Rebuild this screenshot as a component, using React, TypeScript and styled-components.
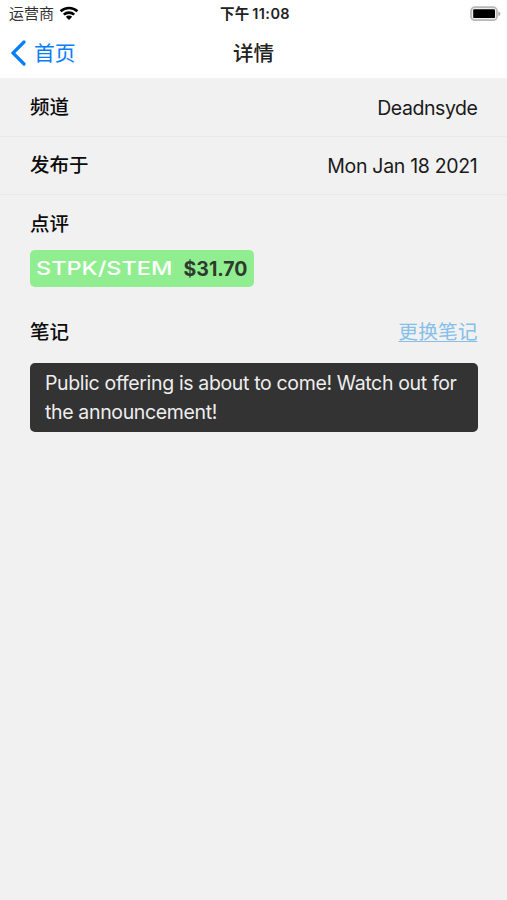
import React from "react";
import styled, { createGlobalStyle } from "styled-components";

const GlobalStyle = createGlobalStyle`
  * { box-sizing: border-box; }
  body {
    margin: 0;
    background: #f1f1f1;
    color: #0c0c0c;
    font-family: Inter, "Noto Sans CJK SC", sans-serif;
  }
`;

const Screen = styled.main`
  width: 507px;
  height: 900px;
  overflow: hidden;
  background: #f1f1f1;
`;

const Header = styled.header`
  height: 79px;
  background: #fff;
  border-bottom: 1px solid #f3f3f3;
`;

const Bar = styled.div<{ $height: number; $padding: string }>`
  display: grid;
  grid-template-columns: 1fr auto 1fr;
  align-items: center;
  height: ${(p) => p.$height}px;
  padding: ${(p) => p.$padding};
`;

const Carrier = styled.div`
  display: flex;
  align-items: center;
  gap: 5px;
  font-size: 15px;
  line-height: 20px;
  color: #333;
`;

const Clock = styled.div`
  font-size: 14.5px;
  line-height: 20px;
  font-weight: 600;
  letter-spacing: 0.4px;
  word-spacing: -1.5px;
  color: #222;
`;

const BatterySlot = styled.div`
  display: flex;
  justify-content: flex-end;
`;

const BackButton = styled.a`
  display: flex;
  align-items: center;
  gap: 8px;
  color: #087dfa;
  font-size: 20.8px;
  line-height: 28px;
`;

const BackText = styled.span`
  padding-top: 2px;
`;

const Title = styled.h1`
  margin: 0;
  padding-top: 2px;
  font-size: 20.5px;
  line-height: 28px;
  font-weight: 500;
  color: #222;
`;

const Row = styled.div`
  display: flex;
  justify-content: space-between;
  align-items: center;
  height: 58px;
  padding: 0 29.5px 0 30px;
  border-bottom: 1px solid #e9e9e9;
`;

const Label = styled.h2`
  margin: 0;
  font-size: 19.5px;
  line-height: 28px;
  font-weight: 500;
`;

const RowLabel = styled(Label)`
  padding-bottom: 1px;
`;

const Value = styled.span<{ $spacing: number }>`
  font-size: 19.5px;
  line-height: 28px;
  letter-spacing: ${(p) => p.$spacing}px;
  color: #1a1a1a;
`;

const Section = styled.section<{ $top: number }>`
  padding: ${(p) => p.$top}px 29.5px 0 30px;
`;

const SectionHead = styled.div`
  display: flex;
  justify-content: space-between;
  align-items: center;
`;

const Tag = styled.div`
  display: flex;
  align-items: center;
  justify-content: space-between;
  width: 223.5px;
  height: 37px;
  margin-top: 11.5px;
  padding: 1px 6px 0;
  border-radius: 5px;
  background: #90ee90;
`;

const Ticker = styled.span`
  width: 138px;
  font-size: 19px;
  line-height: 28px;
  font-weight: 500;
  white-space: nowrap;
  color: #fff;
  transform: scaleX(1.235);
  transform-origin: left center;
`;

const Price = styled.span`
  font-size: 19.5px;
  line-height: 28px;
  font-weight: 700;
  color: #2f3a2f;
`;

const EditLink = styled.a`
  font-size: 19.8px;
  line-height: 28px;
  color: #86bfea;
  text-decoration: underline;
  text-decoration-thickness: 1px;
  text-underline-offset: 2px;
`;

const Note = styled.p`
  height: 69px;
  margin: 17px 0 0;
  padding: 6px 15px;
  border-radius: 5px;
  background: #333;
  color: #eee;
  font-size: 19.5px;
  line-height: 29px;
  letter-spacing: -0.35px;
  white-space: pre;
`;

const WifiIcon = () => (
  <svg width="20" height="15" viewBox="0 0 20 15">
    <g fill="none" stroke="#000" strokeWidth="2.6">
      <path d="M1.6 5.3C6.3 0.9 13.7 0.9 18.4 5.3" />
      <path d="M4.8 8.6C7.8 5.9 12.2 5.9 15.2 8.6" />
    </g>
    <path d="M6.8 10.8C8.6 9.2 11.4 9.2 13.2 10.8L10 14Z" fill="#000" />
  </svg>
);

const BatteryIcon = () => (
  <svg width="31" height="16" viewBox="0 0 31 16">
    <rect x="1" y="1.2" width="26" height="13" rx="3.8" fill="#eee" stroke="#b8b8b8" strokeWidth="1.7" />
    <rect x="3.2" y="3.3" width="21.8" height="8.8" rx="1.2" fill="#000" />
    <path d="M28.4 5.4C31 6 31 9.4 28.4 10Z" fill="#aaa" />
  </svg>
);

const BackIcon = () => (
  <svg width="16" height="26" viewBox="0 0 16 26">
    <path d="M14 2L3 13L14 24" fill="none" stroke="#087dfa" strokeWidth="3.2" strokeLinecap="round" strokeLinejoin="miter" />
  </svg>
);

export default function App() {
  return (
    <Screen>
      <GlobalStyle />
      <Header>
        <Bar $height={27} $padding="0 6px 0 9px">
          <Carrier>
            运营商
            <WifiIcon />
          </Carrier>
          <Clock>下午 11:08</Clock>
          <BatterySlot>
            <BatteryIcon />
          </BatterySlot>
        </Bar>
        <Bar $height={51} $padding="0 10px">
          <BackButton>
            <BackIcon />
            <BackText>首页</BackText>
          </BackButton>
          <Title>详情</Title>
        </Bar>
      </Header>
      <Row>
        <RowLabel>频道</RowLabel>
        <Value $spacing={-0.44}>Deadnsyde</Value>
      </Row>
      <Row>
        <RowLabel>发布于</RowLabel>
        <Value $spacing={-0.31}>Mon Jan 18 2021</Value>
      </Row>
      <Section $top={15}>
        <Label>点评</Label>
        <Tag>
          <Ticker>STPK/STEM</Ticker>
          <Price>$31.70</Price>
        </Tag>
      </Section>
      <Section $top={31.5}>
        <SectionHead>
          <Label>笔记</Label>
          <EditLink>更换笔记</EditLink>
        </SectionHead>
        <Note>{"Public offering is about to come! Watch out for\nthe announcement!"}</Note>
      </Section>
    </Screen>
  );
}
